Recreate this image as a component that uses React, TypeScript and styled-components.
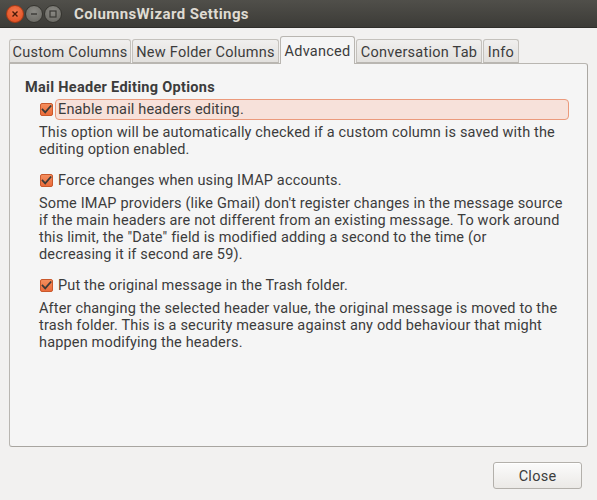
import React from "react";
import styled, { createGlobalStyle } from "styled-components";

const Global = createGlobalStyle`
  html, body { margin: 0; padding: 0; background: #f2f1f0; }
  * { box-sizing: border-box; }
`;

const FONT = `Roboto, "Open Sans", "DejaVu Sans", sans-serif`;

const Window = styled.div`
  width: 597px;
  height: 500px;
  display: flex;
  flex-direction: column;
  background: #f2f1f0;
  font-family: ${FONT};
  color: #3c3c3c;
  overflow: hidden;
`;

const TitleBar = styled.div`
  height: 28px;
  flex: none;
  display: flex;
  align-items: center;
  padding-left: 6px;
  background: linear-gradient(#504f4a, #3c3b37);
  border-bottom: 1px solid #2f2e2b;
`;

const WinButtons = styled.div`
  display: flex;
  align-items: center;
  gap: 1px;
  width: 68px;
`;

const WinBtn = styled.div<{ $close?: boolean }>`
  width: 18px;
  height: 18px;
  border-radius: 50%;
  display: flex;
  align-items: center;
  justify-content: center;
  background: ${(p) =>
    p.$close
      ? "radial-gradient(circle at 50% 35%, #f3784d, #df4a1c)"
      : "radial-gradient(circle at 50% 35%, #8a8984, #66655f)"};
  border: 1px solid ${(p) => (p.$close ? "#a83a16" : "#35342f")};
`;

const Title = styled.div`
  font-weight: 700;
  font-size: 15px;
  color: #dfdbd2;
  letter-spacing: 0.4px;
  padding-top: 1px;
`;

const Body = styled.div`
  flex: 1;
  display: flex;
  flex-direction: column;
  padding: 8px 9px 0 9px;
`;

const TabStrip = styled.div`
  display: flex;
  align-items: flex-end;
  height: 27px;
  position: relative;
  z-index: 1;
`;

const Tab = styled.div<{ $active?: boolean; $w: number }>`
  width: ${(p) => p.$w}px;
  height: ${(p) => (p.$active ? 28 : 24)}px;
  margin-right: 1px;
  display: flex;
  align-items: center;
  justify-content: center;
  font-size: 14.5px;
  letter-spacing: 0.25px;
  white-space: nowrap;
  border: 1px solid ${(p) => (p.$active ? "#b9b6b1" : "#c4c1bc")};
  border-bottom: ${(p) => (p.$active ? "none" : "1px solid #b9b6b1")};
  border-radius: 3px 3px 0 0;
  color: #3c3c3c;
  background: ${(p) =>
    p.$active ? "#f5f5f5" : "linear-gradient(#f0efee, #e2e0dd)"};
  padding-top: ${(p) => (p.$active ? 1 : 2)}px;
  margin-bottom: ${(p) => (p.$active ? -1 : 0)}px;
`;

const Panel = styled.div`
  height: 384px;
  background: #f5f5f5;
  border: 1px solid #b9b6b1;
  border-right-color: #aaa7a2;
  border-bottom-color: #a8a5a0;
  border-radius: 0 3px 3px 3px;
  padding: 15px 18px 0 15px;
  font-size: 14.5px;
  letter-spacing: 0.16px;
  line-height: 17px;
`;

const Heading = styled.div`
  font-weight: 700;
  letter-spacing: 0.3px;
  margin-bottom: 2px;
`;

const Section = styled.div`
  padding-left: 15px;
  margin-bottom: 11px;
`;

const OptionRow = styled.div`
  display: flex;
  align-items: center;
  height: 22px;
  margin-bottom: 4px;
`;

const CheckBox = styled.div`
  width: 13px;
  height: 13px;
  flex: none;
  display: flex;
  margin-right: 2px;
`;

const OptionLabel = styled.div<{ $focused?: boolean }>`
  flex: 1;
  height: 21px;
  display: flex;
  align-items: center;
  padding: 1px 0 0 2px;
  border-radius: 4px;
  border: 1px solid ${(p) => (p.$focused ? "#eb9a7c" : "transparent")};
  background: ${(p) => (p.$focused ? "#f7e1da" : "transparent")};
`;

const Desc = styled.p`
  margin: 0 0 0 -1px;
  white-space: nowrap;
`;

const Footer = styled.div`
  display: flex;
  justify-content: flex-end;
  padding: 15px 6px 0 0;
`;

const Button = styled.button`
  width: 89px;
  height: 27px;
  font-family: ${FONT};
  font-size: 14.5px;
  letter-spacing: 0.25px;
  color: #3c3c3c;
  border: 1px solid #b3b0ab;
  border-radius: 3px;
  background: linear-gradient(#fbfbfb, #ebe9e6);
  box-shadow: inset 0 1px 0 #ffffff;
  padding: 1px 0 0;
`;

const Check = () => (
  <svg width="13" height="13" viewBox="0 0 13 13">
    <defs>
      <linearGradient id="cbg" x1="0" y1="0" x2="0" y2="1">
        <stop offset="0" stopColor="#f5905f" />
        <stop offset="1" stopColor="#ea6a3a" />
      </linearGradient>
    </defs>
    <rect x="0.5" y="0.5" width="12" height="12" rx="1.5" fill="url(#cbg)" stroke="#c9592c" />
    <path d="M2.6 6.6 L5.2 9.3 L10.6 3.2" fill="none" stroke="#3d3b38" strokeWidth="1.8" strokeLinecap="square" />
  </svg>
);

const options = [
  {
    label: "Enable mail headers editing.",
    focused: true,
    desc: [
      "This option will be automatically checked if a custom column is saved with the",
      "editing option enabled.",
    ],
  },
  {
    label: "Force changes when using IMAP accounts.",
    desc: [
      "Some IMAP providers (like Gmail) don't register changes in the message source",
      "if the main headers are not different from an existing message. To work around",
      "this limit, the \"Date\" field is modified adding a second to the time (or",
      "decreasing it if second are 59).",
    ],
  },
  {
    label: "Put the original message in the Trash folder.",
    desc: [
      "After changing the selected header value, the original message is moved to the",
      "trash folder. This is a security measure against any odd behaviour that might",
      "happen modifying the headers.",
    ],
  },
];

const tabs = [
  { name: "Custom Columns", w: 122 },
  { name: "New Folder Columns", w: 147 },
  { name: "Advanced", w: 75, active: true },
  { name: "Conversation Tab", w: 126 },
  { name: "Info", w: 36 },
];

export default function App() {
  return (
    <Window>
      <Global />
      <TitleBar>
        <WinButtons>
          <WinBtn $close>
            <svg width="8" height="8" viewBox="0 0 8 8">
              <path d="M1.5 1.5 L6.5 6.5 M6.5 1.5 L1.5 6.5" stroke="#4a1a08" strokeWidth="1.4" />
            </svg>
          </WinBtn>
          <WinBtn>
            <svg width="8" height="8" viewBox="0 0 8 8">
              <path d="M1 4 H7" stroke="#3a3935" strokeWidth="1.4" />
            </svg>
          </WinBtn>
          <WinBtn>
            <svg width="8" height="8" viewBox="0 0 8 8">
              <rect x="1" y="1" width="6" height="6" fill="none" stroke="#3a3935" strokeWidth="1.2" />
            </svg>
          </WinBtn>
        </WinButtons>
        <Title>ColumnsWizard Settings</Title>
      </TitleBar>
      <Body>
        <TabStrip>
          {tabs.map((t) => (
            <Tab key={t.name} $w={t.w} $active={t.active}>
              {t.name}
            </Tab>
          ))}
        </TabStrip>
        <Panel>
          <Heading>Mail Header Editing Options</Heading>
          {options.map((o) => (
            <Section key={o.label}>
              <OptionRow>
                <CheckBox>
                  <Check />
                </CheckBox>
                <OptionLabel $focused={o.focused}>{o.label}</OptionLabel>
              </OptionRow>
              <Desc>
                {o.desc.map((l, i) => (
                  <React.Fragment key={l}>
                    {i > 0 && <br />}
                    {l}
                  </React.Fragment>
                ))}
              </Desc>
            </Section>
          ))}
        </Panel>
        <Footer>
          <Button>Close</Button>
        </Footer>
      </Body>
    </Window>
  );
}
